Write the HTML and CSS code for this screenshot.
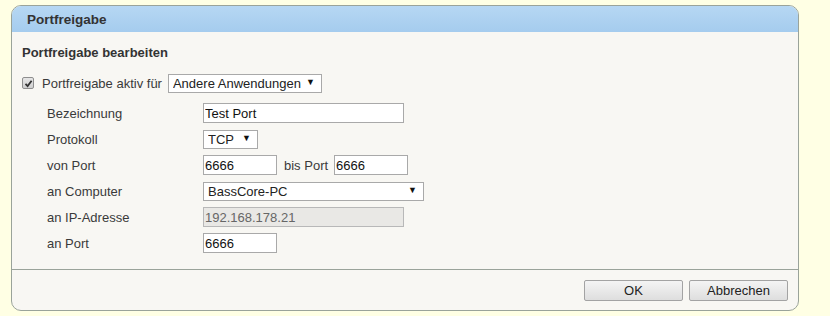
FILE: index.html
```html
<!DOCTYPE html>
<html lang="de">
<head>
    <meta charset="UTF-8">
    <meta name="viewport" content="width=device-width, initial-scale=1.0">
    <title>Portfreigabe</title>
    <link rel="stylesheet" href="styles.css">
</head>
<body>
    <div class="panel">
        <div class="panel-head">Portfreigabe</div>

        <div class="panel-body">
            <h2>Portfreigabe bearbeiten</h2>

            <div class="active-row">
                <span class="check">
                    <svg width="9" height="9" viewBox="0 0 9 9"><path d="M1.5 4.8 L3.6 7 L7.6 1.8" fill="none" stroke="#333" stroke-width="1.8"/></svg>
                </span>
                <span class="active-label">Portfreigabe aktiv für</span>
                <span class="select select-app">
                    <select><option>Andere Anwendungen</option></select>
                </span>
            </div>

            <div class="fields">
                <div class="row">
                    <label>Bezeichnung</label>
                    <input class="field wide" type="text" value="Test Port">
                </div>
                <div class="row">
                    <label>Protokoll</label>
                    <span class="select select-proto">
                        <select><option>TCP</option></select>
                    </span>
                </div>
                <div class="row">
                    <label>von Port</label>
                    <input class="field port" type="text" value="6666">
                    <span class="between">bis Port</span>
                    <input class="field port" type="text" value="6666">
                </div>
                <div class="row">
                    <label>an Computer</label>
                    <span class="select select-pc">
                        <select><option>BassCore-PC</option></select>
                    </span>
                </div>
                <div class="row">
                    <label>an IP-Adresse</label>
                    <input class="field wide" type="text" value="192.168.178.21" disabled>
                </div>
                <div class="row">
                    <label>an Port</label>
                    <input class="field port" type="text" value="6666">
                </div>
            </div>
        </div>

        <div class="panel-foot">
            <button class="btn">OK</button>
            <button class="btn">Abbrechen</button>
        </div>
    </div>
</body>
</html>
```

FILE: styles.css
```css
body {
    font-family: "Liberation Sans", Arial, sans-serif;
    font-size: 13px;
    color: #3a3a3a;
    background-color: #ffffe4;
    margin: 0;
    padding: 5px 0 0 11px;
}

.panel {
    width: 786px;
    height: 304px;
    border: 1px solid #9aa39a;
    border-radius: 10px;
    background-color: #f8f7f3;
    display: flex;
    flex-direction: column;
    overflow: hidden;
}

.panel-head {
    height: 26px;
    line-height: 27px;
    padding-left: 15px;
    font-weight: bold;
    font-size: 13.5px;
    color: #333;
    background: linear-gradient(#b6d7f3, #a5ccee);
}

.panel-body {
    flex: 1;
    padding: 13px 10px 0 10px;
}

.panel-body h2 {
    margin: 0;
    font-size: 13px;
    line-height: 16px;
    color: #333;
}

.active-row {
    display: flex;
    align-items: center;
    height: 18px;
    margin-top: 13px;
}

.check {
    width: 10px;
    height: 10px;
    border: 1px solid #8e8e8e;
    border-radius: 2px;
    background: linear-gradient(#e6e6e6, #cfcfcf);
    display: flex;
    align-items: center;
    justify-content: center;
}

.active-label {
    margin-left: 8px;
    margin-right: 6px;
}

.select {
    position: relative;
    display: inline-block;
}

.select select {
    appearance: none;
    -webkit-appearance: none;
    font-family: inherit;
    font-size: 13px;
    color: #222;
    background: #fff;
    border: 1px solid #a9a9a9;
    border-radius: 0;
    margin: 0;
    padding: 0 0 0 4px;
    height: 19px;
    width: 100%;
}

.select::after {
    content: "\25BC";
    position: absolute;
    right: 7px;
    top: 3px;
    font-size: 9px;
    color: #111;
    pointer-events: none;
}

.select-app { width: 154px; height: 19px; }
.select-proto { width: 55px; height: 19px; }
.select-pc { width: 221px; height: 19px; }

.fields {
    margin-top: 11px;
    padding-left: 25px;
    display: flex;
    flex-direction: column;
    gap: 6px;
}

.row {
    display: flex;
    align-items: center;
    height: 20px;
}

.row label {
    width: 156px;
    flex-shrink: 0;
}

.field {
    font-family: inherit;
    font-size: 13px;
    color: #111;
    background: #fff;
    border: 1px solid #a9a9a9;
    margin: 0;
    padding: 0 1px;
    height: 20px;
    box-sizing: border-box;
    outline: none;
}

.field:disabled {
    background: #e9e8e5;
    color: #666;
    border-color: #b8b8b8;
}

.wide { width: 201px; }
.port { width: 74px; }

.between {
    margin: 0 6px 0 7px;
}

.panel-foot {
    height: 41px;
    border-top: 1px solid #9aa39a;
    display: flex;
    justify-content: flex-end;
    align-items: flex-start;
    gap: 6px;
    padding: 10px 10px 0 0;
    box-sizing: border-box;
}

.btn {
    font-family: inherit;
    font-size: 13px;
    color: #222;
    width: 99px;
    height: 21px;
    padding: 0;
    border: 1px solid #a3a3a3;
    border-radius: 2px;
    background: linear-gradient(#f4f4f4, #dedede);
}
```
